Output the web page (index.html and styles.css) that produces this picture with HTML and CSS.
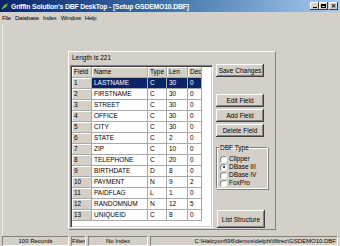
FILE: index.html
```html
<!DOCTYPE html>
<html lang="en">
<head>
  <meta charset="UTF-8" />
  <title>Griffin Solution's DBF DeskTop</title>
  <link rel="stylesheet" href="styles.css">
</head>
<body>
  <div class="titlebar">
    <svg class="app-icon" width="8" height="8" viewBox="0 0 8 8">
      <path d="M1 7 L3 3 L7 1 L6 5 Z" fill="#3c9a2a"/>
      <path d="M1 7 L5 3" stroke="#e8d84a" stroke-width="1"/>
    </svg>
    <span class="title">Griffin Solution's DBF DeskTop - [Setup GSDEMO10.DBF]</span>
    <div class="caption-btns">
      <span class="cap-btn"><span class="glyph-min"></span></span>
      <span class="cap-btn"><span class="glyph-max"></span></span>
      <span class="cap-btn cap-close">&#x2715;</span>
    </div>
  </div>

  <div class="menubar">
    <span>File</span>
    <span>Database</span>
    <span>Index</span>
    <span>Window</span>
    <span>Help</span>
  </div>

  <div class="client">
    <div class="panel">
      <div class="left-col">
        <div class="length">Length is 221</div>
        <div class="grid-frame">
          <div class="grid">
            <div class="fx">Field</div><div class="fx">Name</div><div class="fx">Type</div><div class="fx">Len</div><div class="fx">Dec</div>
            <div class="fx">1</div><div class="sel">LASTNAME</div><div class="sel">C</div><div class="sel">30</div><div class="sel">0</div>
            <div class="fx">2</div><div>FIRSTNAME</div><div>C</div><div>30</div><div>0</div>
            <div class="fx">3</div><div>STREET</div><div>C</div><div>30</div><div>0</div>
            <div class="fx">4</div><div>OFFICE</div><div>C</div><div>30</div><div>0</div>
            <div class="fx">5</div><div>CITY</div><div>C</div><div>30</div><div>0</div>
            <div class="fx">6</div><div>STATE</div><div>C</div><div>2</div><div>0</div>
            <div class="fx">7</div><div>ZIP</div><div>C</div><div>10</div><div>0</div>
            <div class="fx">8</div><div>TELEPHONE</div><div>C</div><div>20</div><div>0</div>
            <div class="fx">9</div><div>BIRTHDATE</div><div>D</div><div>8</div><div>0</div>
            <div class="fx">10</div><div>PAYMENT</div><div>N</div><div>9</div><div>2</div>
            <div class="fx">11</div><div>PAIDFLAG</div><div>L</div><div>1</div><div>0</div>
            <div class="fx">12</div><div>RANDOMNUM</div><div>N</div><div>12</div><div>5</div>
            <div class="fx">13</div><div>UNIQUEID</div><div>C</div><div>8</div><div>0</div>
          </div>
        </div>
      </div>

      <div class="right-col">
        <button class="btn">Save Changes</button>
        <div class="btn-stack">
          <button class="btn">Edit Field</button>
          <button class="btn">Add Field</button>
          <button class="btn">Delete Field</button>
        </div>
        <div class="groupbox">
          <span class="legend">DBF Type</span>
          <div class="radio-row"><span class="radio"></span>Clipper</div>
          <div class="radio-row"><span class="radio checked"></span>DBase III</div>
          <div class="radio-row"><span class="radio"></span>DBase IV</div>
          <div class="radio-row"><span class="radio"></span>FoxPro</div>
        </div>
        <button class="btn btn-tall">List Structure</button>
      </div>
    </div>
  </div>

  <div class="statusbar">
    <div class="sb-panel sb-records">100 Records</div>
    <div class="sb-panel sb-filter">Filter</div>
    <div class="sb-panel sb-index">No Index</div>
    <div class="sb-panel sb-path">C:\Halcyon696\demos\delphi\filtrec\GSDEMO10.DBF</div>
  </div>
</body>
</html>
```

FILE: styles.css
```css
body {
  margin: 0;
  width: 340px;
  height: 246px;
  overflow: hidden;
  background-color: #d4d0c8;
  font-family: "Liberation Sans", Arial, sans-serif;
  font-size: 6.5px;
  color: #000;
}
.titlebar {
  height: 12px;
  display: flex;
  align-items: center;
  background: linear-gradient(to right, #0a246a, #3a6ea5 45%, #a6caf0);
}
.app-icon {
  margin: 0 2px 0 1px;
}
.title {
  color: #fff;
  font-weight: bold;
  font-size: 6.8px;
  letter-spacing: -0.15px;
  white-space: nowrap;
}
.caption-btns {
  margin-left: auto;
  margin-right: 2px;
  display: flex;
}
.cap-btn {
  width: 9px;
  height: 8px;
  box-sizing: border-box;
  background-color: #d4d0c8;
  box-shadow: inset -1px -1px #404040, inset 1px 1px #fff;
  display: flex;
  align-items: center;
  justify-content: center;
  font-size: 6px;
  line-height: 8px;
  font-weight: bold;
}
.cap-close {
  margin-left: 1px;
}
.glyph-min {
  width: 4px;
  height: 1px;
  background: #000;
  margin-top: 3px;
}
.glyph-max {
  width: 5px;
  height: 4px;
  box-sizing: border-box;
  border: 1px solid #000;
  border-top-width: 2px;
}
.menubar {
  height: 12px;
  display: flex;
  align-items: center;
  gap: 4px;
  padding-left: 2px;
  font-size: 6px;
  letter-spacing: -0.2px;
}
.client {
  height: 212px;
  margin-left: 2px;
  padding-top: 27px;
  border-left: 1px solid #eeece6;
  box-sizing: border-box;
}
.panel {
  margin-left: 65px;
  width: 208px;
  height: 179px;
  box-sizing: border-box;
  border: 1px solid;
  border-color: #fff #808080 #808080 #fff;
  display: flex;
}
.left-col {
  padding-left: 1px;
}
.length {
  height: 12px;
  line-height: 12px;
  padding-left: 2px;
}
.grid-frame {
  margin-top: 1px;
  width: 143px;
  height: 163px;
  box-sizing: border-box;
  background-color: #fff;
  border: 1px solid;
  border-color: #808080 #fff #fff #808080;
  box-shadow: inset 1px 1px #404040, inset -1px -1px #d4d0c8;
  padding: 1px;
}
.grid {
  display: grid;
  grid-template-columns: 19px 55px 18px 20px 13px;
  grid-auto-rows: 10px;
  gap: 1px;
  padding: 0 1px 1px 0;
  width: max-content;
  background-color: #a9a9a9;
}
.grid div {
  background-color: #fff;
  padding-left: 2px;
  line-height: 10px;
  white-space: nowrap;
  overflow: hidden;
}
.grid .fx {
  background-color: #d4d0c8;
  box-shadow: inset 1px 1px #fff;
}
.grid .sel {
  background-color: #0a246a;
  color: #fff;
}
.right-col {
  margin-left: 3px;
  padding-top: 12px;
  display: flex;
  flex-direction: column;
  align-items: flex-start;
}
.btn {
  width: 48px;
  height: 13px;
  padding: 0;
  border: none;
  background-color: #d4d0c8;
  box-shadow: inset -1px -1px #404040, inset 1px 1px #fff, inset -2px -2px #808080;
  font-family: inherit;
  font-size: 6.5px;
  color: #000;
}
.btn-stack {
  margin-top: 17px;
  display: flex;
  flex-direction: column;
  gap: 2px;
}
.groupbox {
  margin-top: 10px;
  width: 52px;
  box-sizing: border-box;
  border: 1px solid;
  border-color: #808080 #fff #fff #808080;
  box-shadow: inset 1px 1px #fff, 1px 1px #808080;
  padding: 0 0 1px 3px;
}
.legend {
  display: inline-block;
  margin: -5px 0 0 -1px;
  padding: 0 1px;
  line-height: 9px;
  height: 5px;
  vertical-align: top;
  background-color: #d4d0c8;
}
.radio-row {
  height: 8px;
  display: flex;
  align-items: center;
  gap: 2px;
  line-height: 8px;
}
.radio {
  width: 5px;
  height: 5px;
  border-radius: 50%;
  background-color: #fff;
  border: 1px solid;
  border-color: #808080 #fff #fff #808080;
  display: flex;
  align-items: center;
  justify-content: center;
}
.radio.checked::after {
  content: "";
  width: 2px;
  height: 2px;
  border-radius: 50%;
  background-color: #000;
}
.btn-tall {
  margin-top: 21px;
  height: 18px;
  margin-left: 1px;
}
.statusbar {
  height: 10px;
  display: flex;
  gap: 2px;
  padding: 0 2px;
  font-size: 6px;
}
.sb-panel {
  height: 10px;
  line-height: 9px;
  box-sizing: border-box;
  border: 1px solid;
  border-color: #808080 #fff #fff #808080;
  white-space: nowrap;
  overflow: hidden;
}
.sb-records {
  width: 67px;
  text-align: center;
}
.sb-filter {
  width: 15px;
  text-align: center;
}
.sb-index {
  width: 60px;
  text-align: center;
}
.sb-path {
  flex: 1;
  text-align: right;
  padding-right: 1px;
}
```
